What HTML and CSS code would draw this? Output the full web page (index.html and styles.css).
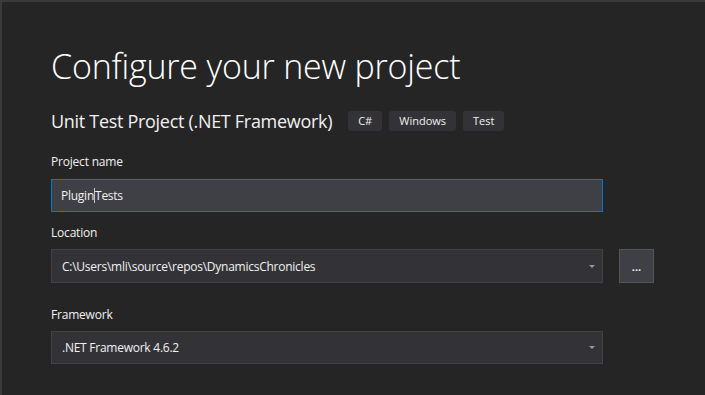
FILE: index.html
```html
<!DOCTYPE html>
<html lang="en">
<head>
    <meta charset="UTF-8">
    <title>Configure your new project</title>
    <link rel="stylesheet" href="styles.css">
</head>
<body>
    <div class="window">
        <h1 class="title">Configure your new project</h1>

        <div class="template-row">
            <h2>Unit Test Project (.NET Framework)</h2>
            <span class="tag">C#</span>
            <span class="tag">Windows</span>
            <span class="tag">Test</span>
        </div>

        <!-- Project name -->
        <div class="field field-name">
            <label>Project name</label>
            <div class="input input-focus">Plugin<span class="caret"></span>Tests</div>
        </div>

        <!-- Location -->
        <div class="field">
            <label>Location</label>
            <div class="field-row">
                <div class="input select">
                    <span>C:\Users\mli\source\repos\DynamicsChronicles</span>
                    <span class="arrow"></span>
                </div>
                <button class="browse">...</button>
            </div>
        </div>

        <!-- Framework -->
        <div class="field field-framework">
            <label>Framework</label>
            <div class="input select">
                <span>.NET Framework 4.6.2</span>
                <span class="arrow"></span>
            </div>
        </div>
    </div>
</body>
</html>
```

FILE: styles.css
```css
* {
    margin: 0;
    padding: 0;
    box-sizing: border-box;
}

html, body {
    width: 705px;
    height: 395px;
    overflow: hidden;
    background: #252526;
}

body {
    font-family: "Open Sans", "Noto Sans", sans-serif;
    color: #f1f1f1;
}

.window {
    height: 395px;
    border-top: 2px solid #3a3a3d;
    border-left: 2px solid #3a3a3d;
    padding: 42px 0 0 49px;
}

.title {
    font-size: 34px;
    font-weight: 300;
    line-height: 44px;
    color: #ffffff;
    letter-spacing: -0.2px;
}

.template-row {
    display: flex;
    align-items: center;
    margin-top: 18px;
    height: 30px;
}

.template-row h2 {
    font-size: 18px;
    font-weight: 400;
    color: #f1f1f1;
    margin-right: 16px;
    letter-spacing: -0.3px;
}

.tag {
    background: #333337;
    border-radius: 3px;
    padding: 0 10px;
    height: 20px;
    line-height: 20px;
    font-size: 11px;
    color: #f1f1f1;
    margin-right: 7px;
}

.field {
    width: 605px;
}

.field label {
    display: block;
    font-size: 12px;
    line-height: 16px;
    letter-spacing: -0.2px;
    color: #f1f1f1;
    margin-top: 13px;
    margin-bottom: 8px;
}

.field-name label {
    margin-top: 18px;
    margin-bottom: 9px;
}

.field-framework label {
    margin-top: 24px;
    margin-bottom: 8px;
}

.field-row {
    display: flex;
    gap: 16px;
}

.input {
    width: 552px;
    height: 34px;
    background: #333337;
    border: 1px solid #434346;
    padding: 0 10px;
    display: flex;
    align-items: center;
    font-size: 12px;
    letter-spacing: -0.25px;
    color: #f1f1f1;
}

.field-framework .input {
    height: 33px;
}

.input-focus {
    background: #3f3f46;
    border-color: #007acc;
    height: 33px;
    padding-left: 9px;
}

.caret {
    display: inline-block;
    width: 1px;
    height: 15px;
    background: #c8c8c8;
}

.select {
    justify-content: space-between;
}

.arrow {
    width: 0;
    height: 0;
    border-left: 3px solid transparent;
    border-right: 3px solid transparent;
    border-top: 3px solid #999999;
    margin-right: -3px;
}

.browse {
    width: 35px;
    height: 34px;
    background: #3f3f46;
    border: 1px solid #555555;
    color: #f1f1f1;
    font-family: inherit;
    font-size: 11px;
    font-weight: 700;
}
```
